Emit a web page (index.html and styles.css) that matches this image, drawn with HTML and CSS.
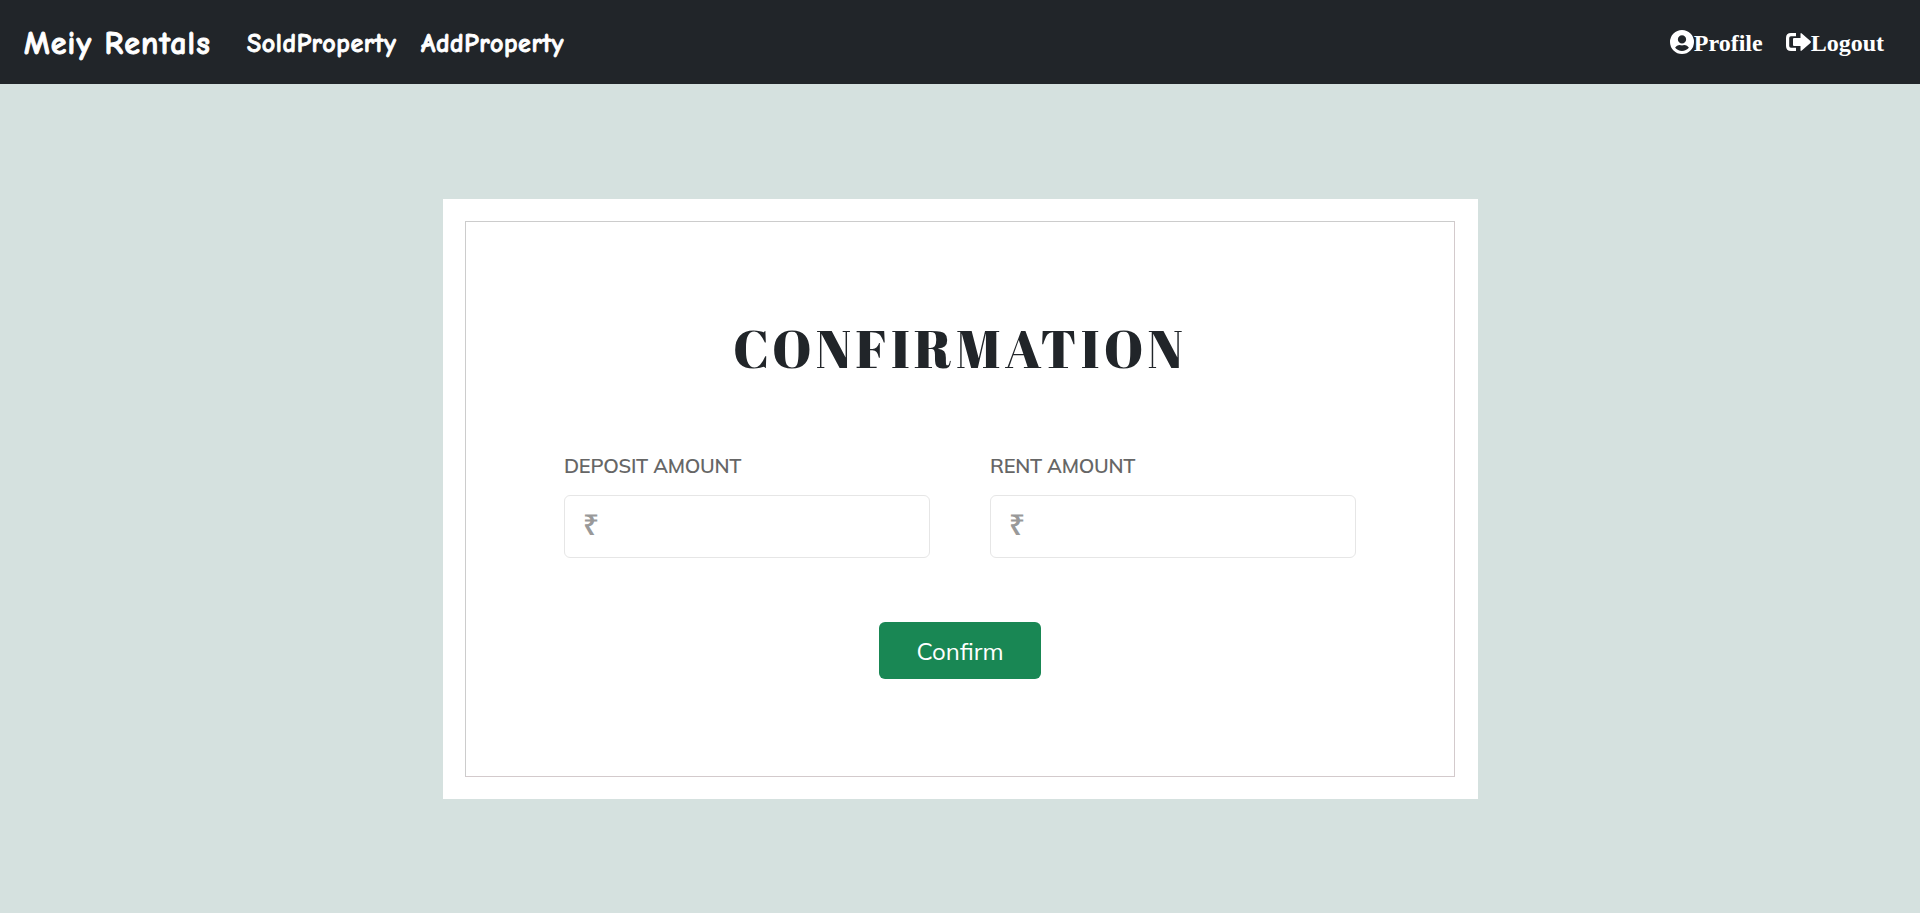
FILE: index.html
```html
<!DOCTYPE html>
<html lang="en">
<head>
<meta charset="utf-8">
<title>Meiy Rentals</title>
<link rel="stylesheet" href="styles.css">
</head>
<body>
<nav class="navbar">
  <a class="brand">Meiy Rentals</a>
  <a class="nav-link sold">SoldProperty</a>
  <a class="nav-link add">AddProperty</a>
  <div class="account">
    <a class="account-link"><svg width="24" height="24" viewBox="0 0 512 512"><path fill="#fff" fill-rule="evenodd" d="M256 0a256 256 0 1 0 0 512a256 256 0 1 0 0-512zM256 112a88 88 0 1 1 0 176a88 88 0 1 1 0-176zM256 448c-59 0-112-26-147-67C128 345 166 320 210 320c4 0 24 8 46 8s42-8 46-8c44 0 82 25 101 61C368 422 315 448 256 448z"/></svg>Profile</a>
    <a class="account-link logout"><svg width="25" height="18" viewBox="0 0 25 18"><path fill="none" stroke="#fff" stroke-width="3.200" d="M10 1.600H5Q1.600 1.600 1.600 5v8q0 3.400 3.400 3.400h5"/><path fill="#fff" d="M14.500 1q0-1.600 1.300-.6l8.600 7.600q1 1 0 2l-8.600 7.600q-1.300 1-1.300-.6v-4H8q-1 0-1-1V6q0-1 1-1h6.500z"/></svg>Logout</a>
  </div>
</nav>
<main class="page">
  <section class="card">
    <form class="frame">
      <h1 class="title">CONFIRMATION</h1>
      <div class="fields">
        <label class="field"><span class="label">DEPOSIT AMOUNT</span><span class="input">₹</span></label>
        <label class="field"><span class="label">RENT AMOUNT</span><span class="input">₹</span></label>
      </div>
      <button class="confirm" type="button">Confirm</button>
    </form>
  </section>
</main>
</body>
</html>
```
FILE: styles.css
```css
* { box-sizing: border-box; }
body { margin: 0; height: 913px; background: #d5e1df; display: flex; flex-direction: column; overflow: hidden; }
.navbar { height: 84px; flex: none; background: #212529; color: #fff; display: flex; align-items: center; padding: 0 36px 0 24px; font-family: "Comic Sans MS", "Comic Neue", Lato, sans-serif; font-weight: 700; white-space: nowrap; }
.brand { font-size: 32px; width: 223px; padding-top: 3px; letter-spacing: 1.050px; -webkit-text-stroke: 0.900px #fff; }
.nav-link { font-size: 26px; padding-top: 3px; letter-spacing: 0.580px; -webkit-text-stroke: 0.800px #fff; }
.sold { width: 174px; }
.account { margin-left: auto; padding-top: 2px; display: flex; align-items: center; gap: 23px; font-family: "Liberation Serif", serif; font-size: 24px; }
.account-link { display: flex; align-items: center; line-height: 28px; }
.account-link svg { margin-bottom: 2px; }
.page { flex: 1; display: flex; justify-content: center; align-items: flex-start; padding: 115px 0 0 1px; }
.card { width: 1035px; height: 600px; padding: 22px; background: #fff; }
.frame { width: 990px; height: 556px; border: 1px solid #ccc; border-right-color: #d3cacc; border-bottom-color: #d3cacc; background: #fff; padding: 92px 98px 0; display: flex; flex-direction: column; align-items: center; }
.title { margin: 0; font: 400 53px/68px "Abril Fatface", "Liberation Serif", serif; color: #212529; letter-spacing: 4.150px; white-space: nowrap; }
.fields { display: flex; gap: 60px; margin-top: 48px; }
.field { width: 366px; display: flex; flex-direction: column; font-family: Mulish, Lato, sans-serif; }
.label { font-size: 20px; font-weight: 650; line-height: 24px; letter-spacing: -0.250px; color: #666; height: 65px; padding-top: 24px; }
.input { height: 63px; border: 1px solid #e6e6e6; border-radius: 6px; background: #fff; padding: 0 18px; font: 600 28px/57px "Noto Sans", sans-serif; color: #999; }
.confirm { margin-top: 64px; width: 162px; height: 57px; border: 0; border-radius: 6px; background: #198754; color: #fff; font: 400 24px/30px Mulish, Lato, sans-serif; padding: 0; }
```
